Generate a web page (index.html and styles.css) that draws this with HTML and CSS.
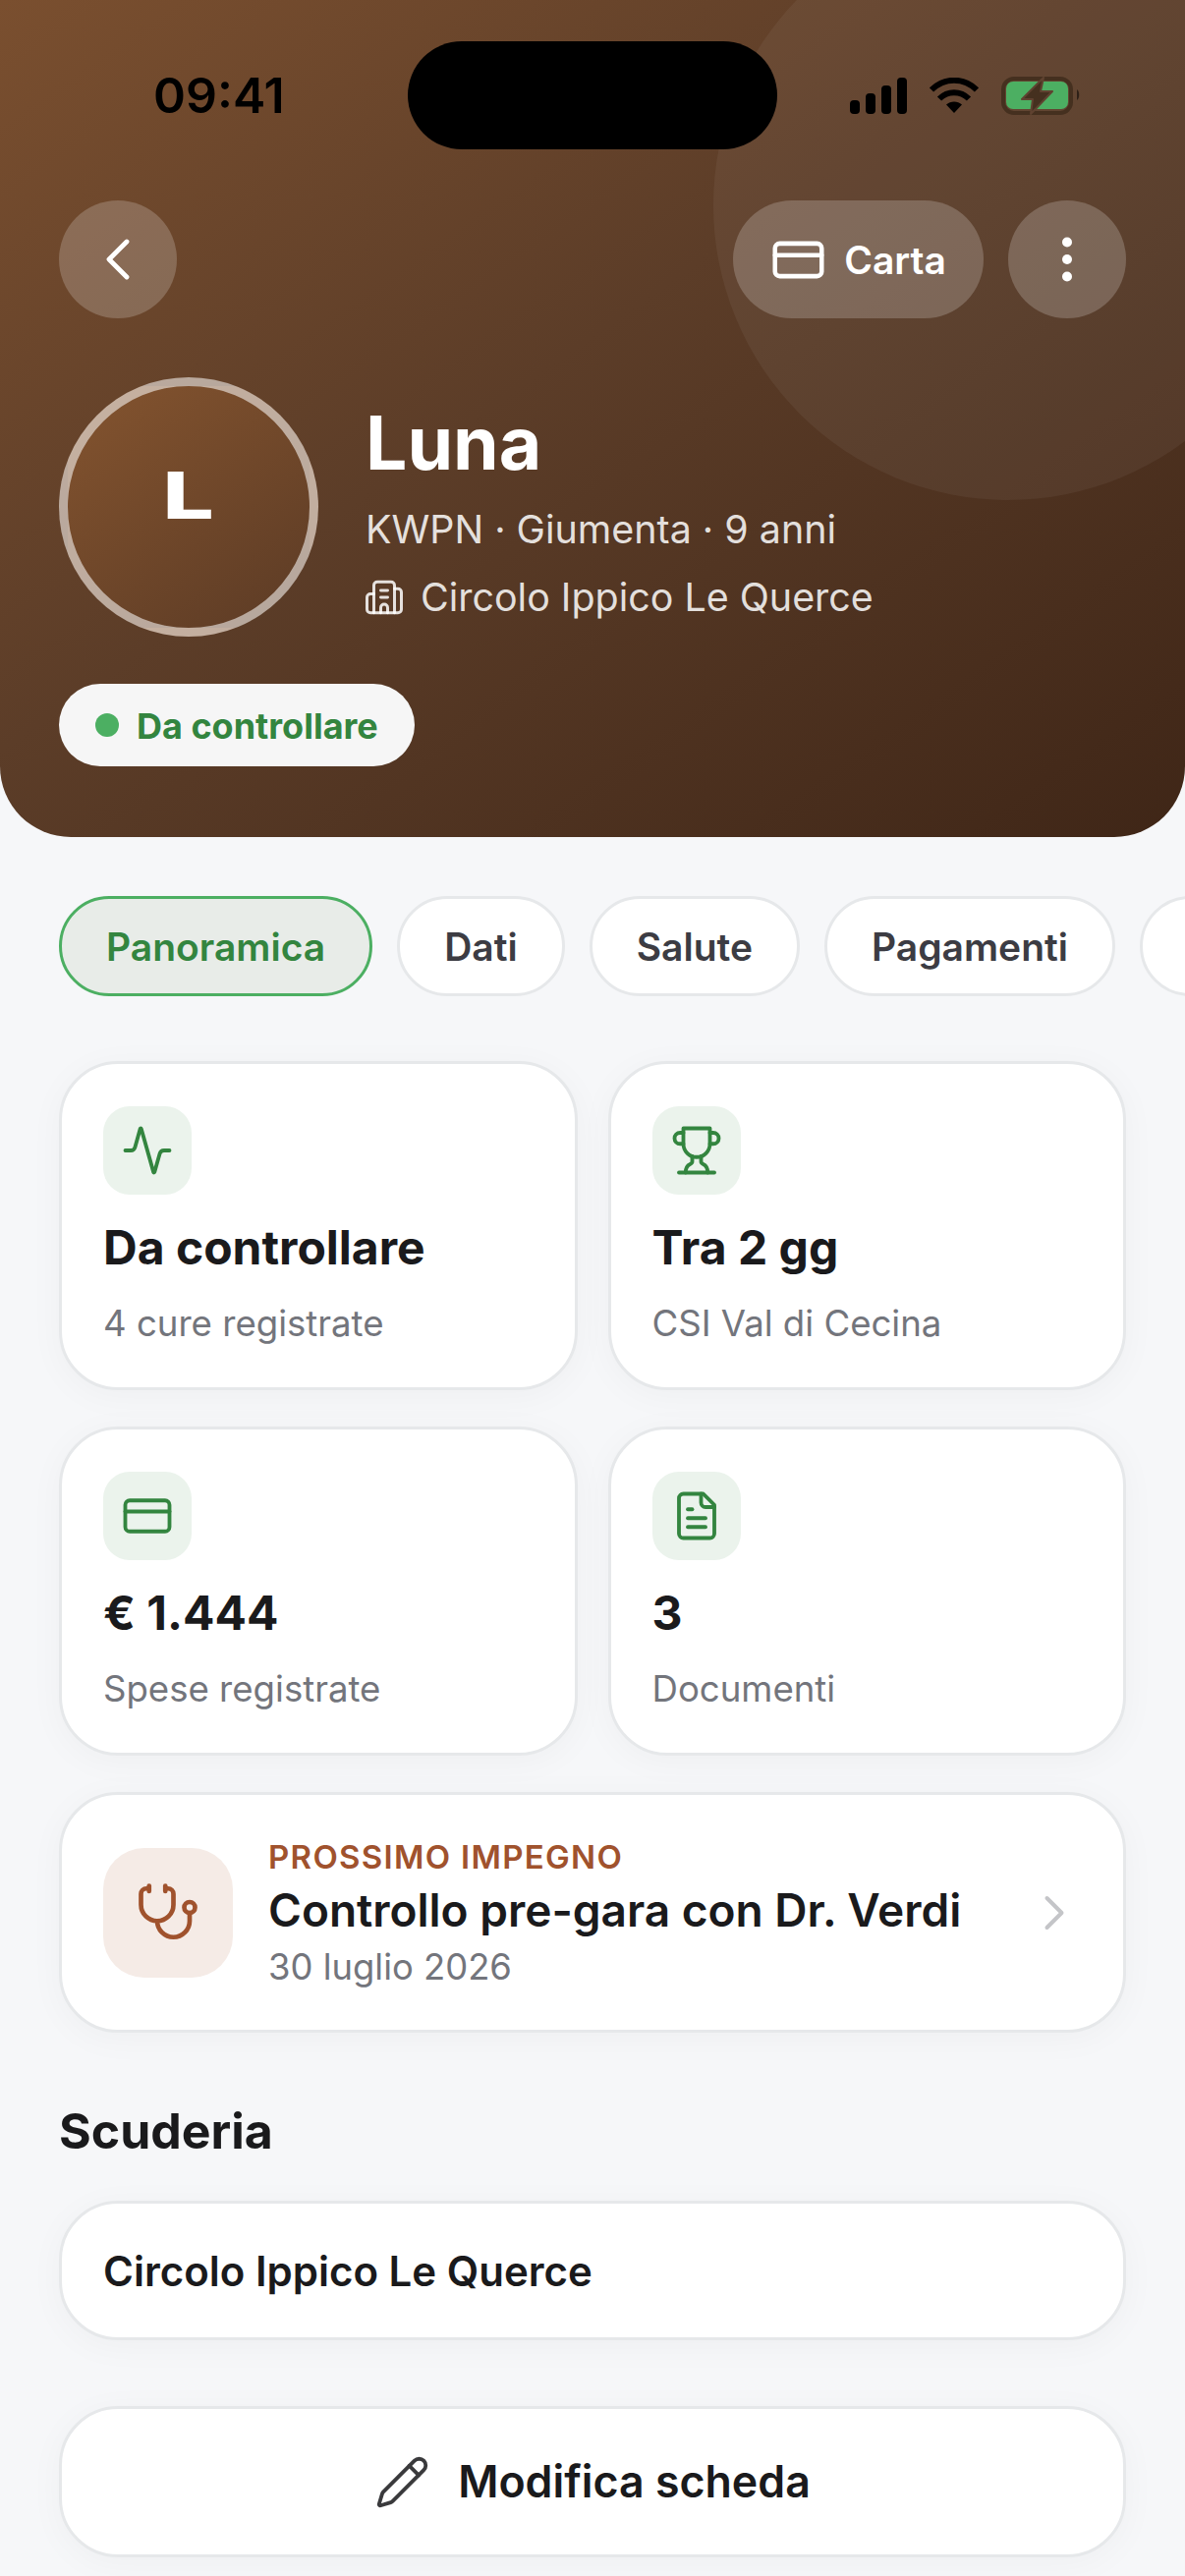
FILE: index.html
```html
<!DOCTYPE html>
<html lang="it">
<head>
  <meta charset="UTF-8" />
  <meta name="viewport" content="width=device-width, initial-scale=1.0" />
  <title>Luna - Scheda cavallo</title>
  <link rel="stylesheet" href="styles.css">
</head>
<body>
  <div class="page">
    <header class="hero">
      <div class="hero-circle"></div>

      <div class="status-bar">
        <span class="time">09:41</span>
        <div class="island"></div>
        <div class="status-icons">
          <svg class="signal" width="58" height="37" viewBox="0 0 58 37" fill="#000">
            <rect x="0" y="23" width="10" height="14" rx="4" />
            <rect x="16" y="16" width="10" height="21" rx="4" />
            <rect x="32" y="8" width="10" height="29" rx="4" />
            <rect x="48" y="0" width="10" height="37" rx="4" />
          </svg>
          <svg class="wifi" width="50" height="37" viewBox="0 0 50 37" fill="none" stroke="#000" stroke-width="6">
            <path d="M2 12.5C15 -0.5 35 -0.5 48 12.5" />
            <path d="M10 21.5C18.5 13 31.500 13 40 21.5" />
            <path d="M17 27.500L25 36L33 27.500C28.500 23.500 21.500 23.500 17 27.500Z" fill="#000" stroke="none" />
          </svg>
          <svg class="battery" width="81" height="39" viewBox="0 0 81 39">
            <rect x="2" y="2" width="69" height="35" rx="11" fill="none" stroke="#45301f" stroke-width="4" />
            <rect x="5" y="5" width="63" height="28" rx="7" fill="#4caf62" />
            <path d="M77 13c3 2 3 9 0 11z" fill="#2e2017" />
            <path d="M43 1L21 23H32L30 38L52 15H40Z" fill="#45301f" stroke="#5f4230" stroke-width="2" stroke-linejoin="round" />
          </svg>
        </div>
      </div>

      <div class="hero-actions">
        <button class="glass-btn round">
          <svg width="72" height="72" viewBox="0 0 24 24" fill="none" stroke="#fff" stroke-width="1.600" stroke-linecap="round" stroke-linejoin="round"><path d="m15 18-6-6 6-6" /></svg>
        </button>
        <div class="hero-actions-right">
          <button class="glass-btn carta">
            <svg width="57" height="57" viewBox="0 0 24 24" fill="none" stroke="#fff" stroke-width="1.900" stroke-linecap="round" stroke-linejoin="round"><rect x="2" y="5" width="20" height="14" rx="2" /><line x1="2" y1="10" x2="22" y2="10" /></svg>
            Carta
          </button>
          <button class="glass-btn round">
            <svg width="60" height="60" viewBox="0 0 24 24" fill="#fff"><circle cx="12" cy="5" r="2" /><circle cx="12" cy="12" r="2" /><circle cx="12" cy="19" r="2" /></svg>
          </button>
        </div>
      </div>

      <div class="profile">
        <div class="avatar"><span class="avatar-letter">L</span></div>
        <div class="profile-text">
          <h1>Luna</h1>
          <p class="meta">KWPN · Giumenta · 9 anni</p>
          <p class="meta place">
            <svg width="42" height="42" viewBox="0 0 24 24" fill="none" stroke="currentColor" stroke-width="1.700" stroke-linecap="round" stroke-linejoin="round"><path d="M10 12h4" /><path d="M10 8h4" /><path d="M14 21v-3a2 2 0 0 0-4 0v3" /><path d="M6 10H4a2 2 0 0 0-2 2v7a2 2 0 0 0 2 2h16a2 2 0 0 0 2-2V9a2 2 0 0 0-2-2h-2" /><path d="M6 21V5a2 2 0 0 1 2-2h8a2 2 0 0 1 2 2v16" /></svg>
            Circolo Ippico Le Querce
          </p>
        </div>
      </div>

      <div class="status-pill"><span class="dot"></span><span class="pill-label">Da controllare</span></div>
    </header>

    <nav class="tabs">
      <span class="tab active">Panoramica</span>
      <span class="tab">Dati</span>
      <span class="tab">Salute</span>
      <span class="tab">Pagamenti</span>
      <span class="tab tab-more"></span>
    </nav>

    <main class="content">
      <div class="stats">
        <div class="card stat">
          <div class="stat-icon">
            <svg width="54" height="54" viewBox="0 0 24 24" fill="none" stroke="currentColor" stroke-width="1.700" stroke-linecap="round" stroke-linejoin="round"><path d="M22 12h-2.480a2 2 0 0 0-1.930 1.460l-2.350 8.360a.25.25 0 0 1-.48 0L9.240 2.180a.25.25 0 0 0-.48 0l-2.350 8.360A2 2 0 0 1 4.490 12H2" /></svg>
          </div>
          <div class="stat-title">Da controllare</div>
          <div class="stat-sub">4 cure registrate</div>
        </div>
        <div class="card stat">
          <div class="stat-icon">
            <svg width="54" height="54" viewBox="0 0 24 24" fill="none" stroke="currentColor" stroke-width="1.700" stroke-linecap="round" stroke-linejoin="round"><path d="M6 9H4.500a2.500 2.500 0 0 1 0-5H6" /><path d="M18 9h1.500a2.500 2.500 0 0 0 0-5H18" /><path d="M4 22h16" /><path d="M10 14.660V17c0 .55-.47.98-.97 1.210C7.850 18.750 7 20.240 7 22" /><path d="M14 14.660V17c0 .55.47.98.97 1.210C16.150 18.750 17 20.240 17 22" /><path d="M18 2H6v7a6 6 0 0 0 12 0V2Z" /></svg>
          </div>
          <div class="stat-title">Tra 2 gg</div>
          <div class="stat-sub">CSI Val di Cecina</div>
        </div>
        <div class="card stat">
          <div class="stat-icon">
            <svg width="54" height="54" viewBox="0 0 24 24" fill="none" stroke="currentColor" stroke-width="1.700" stroke-linecap="round" stroke-linejoin="round"><rect x="2" y="5" width="20" height="14" rx="2" /><line x1="2" y1="10" x2="22" y2="10" /></svg>
          </div>
          <div class="stat-title">€ 1.444</div>
          <div class="stat-sub">Spese registrate</div>
        </div>
        <div class="card stat">
          <div class="stat-icon">
            <svg width="54" height="54" viewBox="0 0 24 24" fill="none" stroke="currentColor" stroke-width="1.700" stroke-linecap="round" stroke-linejoin="round"><path d="M15 2H6a2 2 0 0 0-2 2v16a2 2 0 0 0 2 2h12a2 2 0 0 0 2-2V7Z" /><path d="M14 2v4a2 2 0 0 0 2 2h4" /><path d="M10 9H8" /><path d="M16 13H8" /><path d="M16 17H8" /></svg>
          </div>
          <div class="stat-title">3</div>
          <div class="stat-sub">Documenti</div>
        </div>
      </div>

      <div class="card next">
        <div class="next-icon">
          <svg width="66" height="66" viewBox="0 0 24 24" fill="none" stroke="currentColor" stroke-width="1.700" stroke-linecap="round" stroke-linejoin="round"><path d="M11 2v2" /><path d="M5 2v2" /><path d="M5 3H4a2 2 0 0 0-2 2v4a6 6 0 0 0 12 0V5a2 2 0 0 0-2-2h-1" /><path d="M8 15a6 6 0 0 0 12 0v-3" /><circle cx="20" cy="10" r="2" /></svg>
        </div>
        <div class="next-text">
          <div class="next-label">PROSSIMO IMPEGNO</div>
          <div class="next-title">Controllo pre-gara con Dr. Verdi</div>
          <div class="next-date">30 luglio 2026</div>
        </div>
        <svg class="next-arrow" width="60" height="60" viewBox="0 0 24 24" fill="none" stroke="#c4c5c8" stroke-width="1.600" stroke-linecap="round" stroke-linejoin="round"><path d="m9 18 6-6-6-6" /></svg>
      </div>

      <h2 class="section-title">Scuderia</h2>
      <div class="card stable">Circolo Ippico Le Querce</div>

      <button class="card edit-btn">
        <svg width="57" height="57" viewBox="0 0 24 24" fill="none" stroke="#3a3a3c" stroke-width="1.600" stroke-linecap="round" stroke-linejoin="round"><path d="M21.174 6.812a1 1 0 0 0-3.986-3.987L3.842 16.174a2 2 0 0 0-.5.83l-1.321 4.352a.5.5 0 0 0 .623.622l4.353-1.320a2 2 0 0 0 .83-.497z" /><path d="m15 5 4 4" /></svg>
        Modifica scheda
      </button>
    </main>
  </div>
</body>
</html>
```

FILE: styles.css
```css
* {
  box-sizing: border-box;
}
body {
  margin: 0;
  font-family: Inter, "Liberation Sans", sans-serif;
  background-color: #f6f7f9;
  color: #1a1a1c;
}
button {
  font-family: inherit;
  cursor: pointer;
}
.page {
  width: 1206px;
  height: 2622px;
  overflow: hidden;
}

/* header */
.hero {
  position: relative;
  overflow: hidden;
  height: 852px;
  padding: 42px 60px 0;
  background: linear-gradient(145deg, #7a4f2f 0%, #5c3d28 45%, #3f2617 100%);
  border-radius: 0 0 72px 72px;
  color: #fff;
}
.hero-circle {
  position: absolute;
  top: -91px;
  right: -120px;
  width: 600px;
  height: 600px;
  border-radius: 50%;
  background: rgba(255, 255, 255, 0.05);
}
.status-bar {
  position: relative;
  display: grid;
  grid-template-columns: 355px 376px 1fr;
  align-items: center;
  height: 110px;
  margin-bottom: 52px;
}
.time {
  padding-left: 96px;
  font-size: 50px;
  font-weight: 600;
  color: #000;
}
.island {
  height: 110px;
  border-radius: 55px;
  background: #000;
}
.status-icons {
  display: flex;
  align-items: center;
  gap: 23px;
  padding-left: 74px;
}
.hero-actions {
  position: relative;
  display: flex;
  justify-content: space-between;
}
.hero-actions-right {
  display: flex;
  gap: 25px;
}
.glass-btn {
  display: flex;
  align-items: center;
  justify-content: center;
  height: 120px;
  border: none;
  border-radius: 60px;
  background: rgba(255, 255, 255, 0.2);
  color: #fff;
}
.round {
  width: 120px;
  padding: 0;
}
.carta {
  gap: 18px;
  width: 255px;
  padding: 0;
  font-size: 39px;
  font-weight: 600;
}
.profile {
  position: relative;
  display: flex;
  gap: 48px;
  margin-top: 60px;
}
.avatar {
  display: flex;
  align-items: center;
  justify-content: center;
  width: 264px;
  height: 264px;
  padding-bottom: 24px;
  border: 9px solid rgba(255, 255, 255, 0.55);
  border-radius: 50%;
  background: linear-gradient(145deg, #84542f, #5c3b25);
  font-size: 66px;
  font-weight: 800;
}
.avatar-letter {
  display: inline-block;
  transform: scaleX(1.4);
}
.profile-text h1 {
  margin: 20px 0 0;
  font-size: 75px;
  font-weight: 700;
  line-height: 94px;
}
.meta {
  display: flex;
  align-items: center;
  margin: 14px 0 0;
  font-size: 39.4px;
  line-height: 54px;
  color: rgba(255, 255, 255, 0.85);
}
.place {
  gap: 16px;
  margin-top: 15px;
  margin-left: -2px;
}
.status-pill {
  position: relative;
  display: inline-flex;
  align-items: center;
  gap: 18px;
  height: 84px;
  margin-top: 48px;
  padding: 0 37px;
  border-radius: 42px;
  background: #f6f6f6;
  font-size: 36px;
  font-weight: 700;
  color: #33853f;
}
.pill-label {
  padding-top: 2px;
}
.dot {
  width: 24px;
  height: 24px;
  border-radius: 50%;
  background: #4caf62;
}

/* tabs */
.tabs {
  display: flex;
  gap: 25px;
  margin-top: 60px;
  padding-left: 60px;
}
.tab {
  display: flex;
  align-items: center;
  flex: none;
  height: 102px;
  padding: 0 45px;
  border: 3px solid #e6e8ea;
  border-radius: 51px;
  background: #fff;
  font-size: 39px;
  font-weight: 600;
  color: #3c3c43;
}
.tab.active {
  border-color: #4caf62;
  background: #e8ece8;
  color: #33853f;
}
.tab-more {
  width: 200px;
}

/* content */
.content {
  padding: 66px 60px 0;
}
.card {
  border: 3px solid #e6e8ea;
  border-radius: 60px;
  background: #fff;
  box-shadow: 0 6px 36px rgba(0, 0, 0, 0.035);
}
.stats {
  display: grid;
  grid-template-columns: 1fr 1fr;
  gap: 37px 31px;
}
.stat {
  height: 335px;
  padding: 43px 42px 0;
}
.stat-icon {
  display: flex;
  align-items: center;
  justify-content: center;
  width: 90px;
  height: 90px;
  border-radius: 27px;
  background: #ebf3ec;
  color: #33853f;
}
.stat-title {
  margin-top: 23px;
  font-size: 48px;
  font-weight: 700;
  line-height: 62px;
}
.stat-sub {
  margin-top: 21px;
  font-size: 36.6px;
  line-height: 50px;
  color: #73757c;
}
.next {
  display: flex;
  align-items: center;
  height: 245px;
  margin-top: 37px;
  padding: 0 42px;
}
.next-icon {
  display: flex;
  align-items: center;
  justify-content: center;
  flex: none;
  width: 132px;
  height: 132px;
  margin-right: 36px;
  border-radius: 42px;
  background: #f5ebe6;
  color: #a0522d;
}
.next-text {
  flex: 1;
}
.next-label {
  margin-top: 3px;
  font-size: 33px;
  font-weight: 600;
  letter-spacing: 1.300px;
  line-height: 40px;
  color: #a0522d;
}
.next-title {
  margin-top: 4px;
  font-size: 46px;
  font-weight: 600;
  line-height: 60px;
}
.next-date {
  margin-top: 3px;
  font-size: 36.4px;
  line-height: 50px;
  color: #73757c;
}
.next-arrow {
  margin-right: -2px;
  margin-left: 6px;
}
.section-title {
  margin: 69px 0 0;
  font-size: 50px;
  font-weight: 700;
  line-height: 62px;
}
.stable {
  display: flex;
  align-items: center;
  height: 142px;
  margin-top: 40px;
  padding: 0 42px;
  font-size: 42px;
  font-weight: 600;
}
.edit-btn {
  display: flex;
  align-items: center;
  justify-content: center;
  gap: 28px;
  width: 100%;
  height: 154px;
  margin-top: 67px;
  font-size: 44.7px;
  font-weight: 600;
  color: #1a1a1c;
}
```
